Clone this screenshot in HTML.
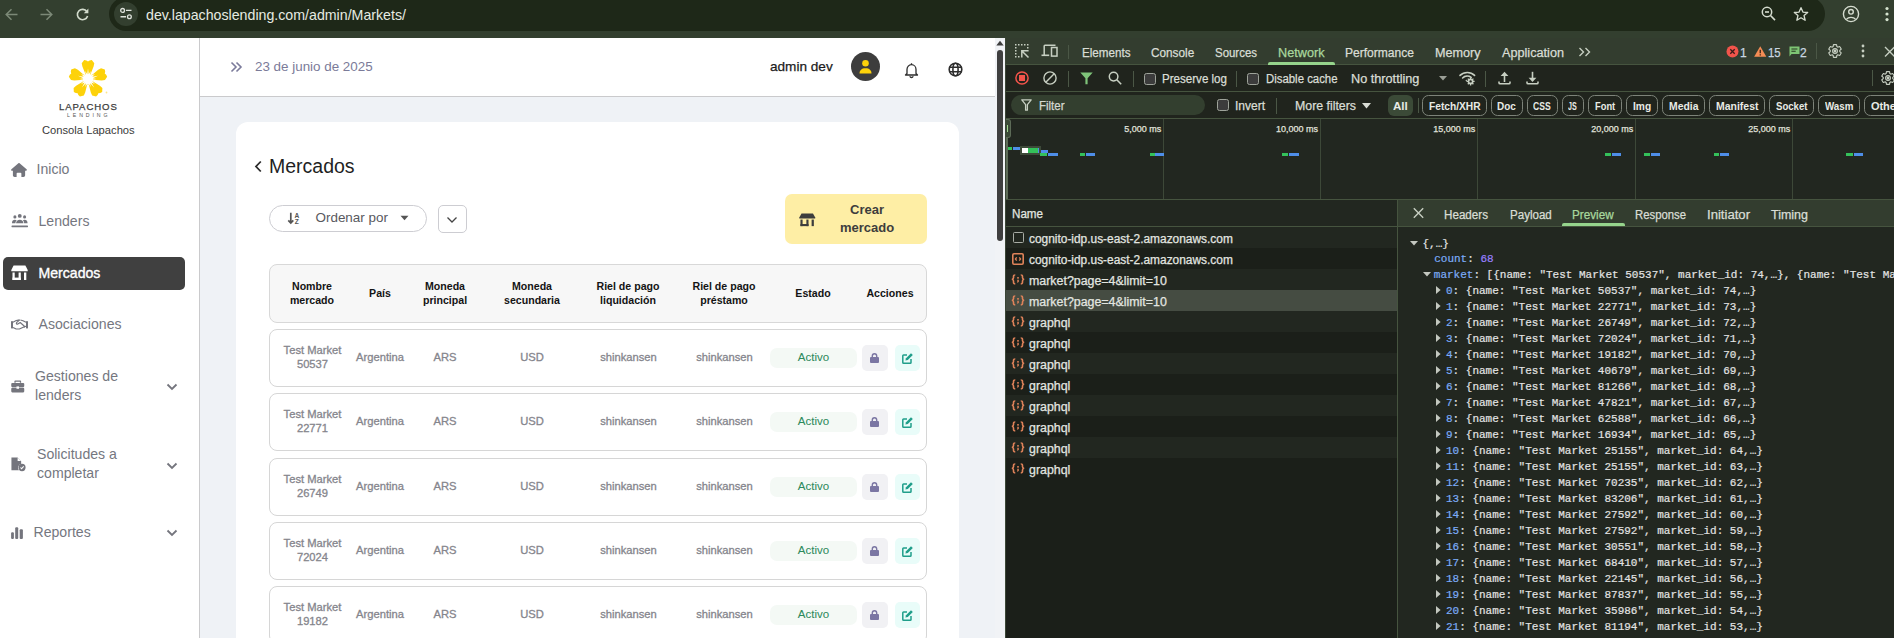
<!DOCTYPE html>
<html><head><meta charset="utf-8">
<style>
*{box-sizing:border-box;margin:0;padding:0}
html,body{width:1894px;height:638px;overflow:hidden;background:#fff;font-family:"Liberation Sans",sans-serif}
.a{position:absolute}
.t{position:absolute;white-space:nowrap;line-height:1}
svg{position:absolute;overflow:visible}
/* browser bar */
#bar{left:0;top:0;width:1894px;height:38px;background:#333f2f}
#pill{left:109px;top:-3.3px;width:1716px;height:34px;border-radius:17px;background:#1e2818}
/* sidebar */
#side{left:0;top:38px;width:200px;height:600px;background:#fff;border-right:1px solid #cacacc}
.nav{position:absolute;font-size:14.1px;color:#75777f;white-space:nowrap;line-height:19px}
/* header */
#hdr{left:200px;top:38px;width:795px;height:59px;background:#fff;border-bottom:1px solid #cacacc}
#content{left:200px;top:97px;width:795px;height:541px;background:#eff2f6}
#card{left:236px;top:122px;width:723px;height:540px;background:#fff;border-radius:12px}
.th{position:absolute;font-size:10.6px;font-weight:bold;color:#141414;text-align:center;line-height:14px;white-space:nowrap}
.row{position:absolute;left:269px;width:658px;height:58px;border:1px solid #d6d6d6;border-radius:8px;background:#fff}
.td{position:absolute;font-size:11.2px;color:#85858c;-webkit-text-stroke:0.3px #85858c;text-align:center;line-height:14px;white-space:nowrap;transform:translateX(-50%)}
.badge{position:absolute;width:87px;height:19.5px;border-radius:7px;background:#f4f9f5;color:#2d8a5c;-webkit-text-stroke:0.05px #2d8a5c;font-size:11.5px;text-align:center;line-height:19px}
.lock{position:absolute;width:26px;height:26px;border-radius:5px;background:#f1f1f4}
.edit{position:absolute;width:25px;height:26px;border-radius:5px;background:#e9fcf9}
/* devtools */
#dt{left:1005px;top:38px;width:889px;height:600px;background:#222720}
</style></head><body>

<!-- ============ BROWSER BAR ============ -->
<div id="bar" class="a">
  <div id="pill" class="a"></div>
  <!-- back -->
  <svg style="left:4.5px;top:7.5px" width="13" height="13" viewBox="0 0 13 13"><path d="M12.5 6.5H1.5M6.5 1.2L1.2 6.5l5.3 5.3" fill="none" stroke="#7c8977" stroke-width="1.5"/></svg>
  <svg style="left:40px;top:7.5px" width="13" height="13" viewBox="0 0 13 13"><path d="M0.5 6.5h11M6.5 1.2l5.3 5.3-5.3 5.3" fill="none" stroke="#7c8977" stroke-width="1.5"/></svg>
  <svg style="left:76px;top:7.5px" width="14" height="13" viewBox="0 0 14 13"><path d="M10.9 3.6A5.2 5.2 0 1 0 11.6 8" fill="none" stroke="#d3dccd" stroke-width="1.6"/><path d="M12.4 0.6v4.6H7.8z" fill="#d3dccd"/></svg>
  <div class="a" style="left:114px;top:2px;width:24px;height:24px;border-radius:12px;background:#333f2f"></div>
  <svg style="left:118px;top:6px" width="16" height="16" viewBox="0 0 16 16"><circle cx="4.6" cy="4.4" r="1.9" fill="none" stroke="#dfe3dc" stroke-width="1.3"/><path d="M8 4.4h5.5M2.5 10.8H8" stroke="#dfe3dc" stroke-width="1.4"/><circle cx="11.4" cy="10.8" r="1.9" fill="none" stroke="#dfe3dc" stroke-width="1.3"/></svg>
  <div class="t" style="left:146px;top:7px;font-size:14.2px;color:#e6ebe2;line-height:16px">dev.lapachoslending.com/admin/Markets/</div>
  <!-- zoom out -->
  <svg style="left:1760px;top:5px" width="18" height="18" viewBox="0 0 18 18"><circle cx="7" cy="7" r="4.7" fill="none" stroke="#d5dccf" stroke-width="1.5"/><path d="M5 7h4" stroke="#d5dccf" stroke-width="1.6"/><path d="M10.5 10.5l4.5 4.6" stroke="#d5dccf" stroke-width="1.6"/></svg>
  <svg style="left:1793px;top:6px" width="16" height="16" viewBox="0 0 24 24"><path d="M12 2.5l2.9 6.6 7.1.6-5.4 4.7 1.6 7-6.2-3.7-6.2 3.7 1.6-7L2 9.7l7.1-.6z" fill="none" stroke="#d5dccf" stroke-width="2" stroke-linejoin="round"/></svg>
  <svg style="left:1842px;top:5px" width="18" height="18" viewBox="0 0 18 18"><circle cx="9" cy="9" r="7.6" fill="none" stroke="#d5dccf" stroke-width="1.4"/><circle cx="9" cy="6.8" r="2.3" fill="none" stroke="#d5dccf" stroke-width="1.4"/><path d="M4.3 14.4c1.2-1.4 2.8-2 4.7-2s3.5.6 4.7 2" fill="none" stroke="#d5dccf" stroke-width="1.4"/></svg>
  <svg style="left:1884px;top:6px" width="6" height="16" viewBox="0 0 6 16"><circle cx="3" cy="2.5" r="1.6" fill="#d5e3cf"/><circle cx="3" cy="8" r="1.6" fill="#d5e3cf"/><circle cx="3" cy="13.6" r="1.6" fill="#d5e3cf"/></svg>
</div>

<!-- ============ SIDEBAR ============ -->
<div id="side" class="a"></div>
<!-- logo -->
<svg style="left:66px;top:57px" width="44" height="44" viewBox="-22 -22 44 44">
  <g fill="#fdd20a">
    <path d="M-2.2,-4 L-5.6,-12.5 L-6.3,-15.8 L-3.8,-18.9 L-1.6,-18.6 L0,-17.6 L1.6,-18.6 L3.8,-18.9 L6.3,-15.8 L5.6,-12.5 L2.2,-4 Z"/>
    <path d="M-2.2,-4 L-5.6,-12.5 L-6.3,-15.8 L-3.8,-18.9 L-1.6,-18.6 L0,-17.6 L1.6,-18.6 L3.8,-18.9 L6.3,-15.8 L5.6,-12.5 L2.2,-4 Z" transform="rotate(72)"/>
    <path d="M-2.2,-4 L-5.6,-12.5 L-6.3,-15.8 L-3.8,-18.9 L-1.6,-18.6 L0,-17.6 L1.6,-18.6 L3.8,-18.9 L6.3,-15.8 L5.6,-12.5 L2.2,-4 Z" transform="rotate(144)"/>
    <path d="M-2.2,-4 L-5.6,-12.5 L-6.3,-15.8 L-3.8,-18.9 L-1.6,-18.6 L0,-17.6 L1.6,-18.6 L3.8,-18.9 L6.3,-15.8 L5.6,-12.5 L2.2,-4 Z" transform="rotate(216)"/>
    <path d="M-2.2,-4 L-5.6,-12.5 L-6.3,-15.8 L-3.8,-18.9 L-1.6,-18.6 L0,-17.6 L1.6,-18.6 L3.8,-18.9 L6.3,-15.8 L5.6,-12.5 L2.2,-4 Z" transform="rotate(288)"/>
    <circle r="6"/>
  </g>
  <polygon points="0.00,-10.50 0.75,-4.74 2.63,-8.08 2.18,-4.28 6.17,-8.49 3.39,-3.39 6.88,-5.00 4.28,-2.18 9.99,-3.24 4.74,-0.75 8.50,0.00 4.74,0.75 9.99,3.24 4.28,2.18 6.88,5.00 3.39,3.39 6.17,8.49 2.18,4.28 2.63,8.08 0.75,4.74 0.00,10.50 -0.75,4.74 -2.63,8.08 -2.18,4.28 -6.17,8.49 -3.39,3.39 -6.88,5.00 -4.28,2.18 -9.99,3.24 -4.74,0.75 -8.50,0.00 -4.74,-0.75 -9.99,-3.24 -4.28,-2.18 -6.88,-5.00 -3.39,-3.39 -6.17,-8.49 -2.18,-4.28 -2.63,-8.08 -0.75,-4.74" fill="#fff"/>
  <circle cx="18.5" cy="13.5" r="0.9" fill="#fde58a"/>
</svg>
<div class="t" style="left:59px;top:102px;font-size:9.6px;color:#3d3d3d;-webkit-text-stroke:0.25px #3d3d3d;letter-spacing:0.9px;line-height:9px">LAPACHOS</div>
<div class="t" style="left:67px;top:111.5px;font-size:5.2px;color:#555;letter-spacing:2.9px;line-height:6px">LENDING</div>
<div class="t" style="left:42px;top:124px;font-size:11.2px;color:#3a3a3a;line-height:13px">Consola Lapachos</div>

<!-- nav -->
<svg style="left:10.5px;top:162.5px" width="16" height="14" viewBox="0 0 576 512"><path fill="#74757d" d="M575.8 255.5c0 18-15 32.1-32 32.1h-32l.7 160.2c.2 35.5-28.5 64.3-64 64.3H375V384c0-17.7-14.3-32-32-32h-110c-17.7 0-32 14.3-32 32v128h-72.2c-35.3 0-64-28.7-64-64V287.6H32c-18 0-32-14-32-32.1 0-9 3-17 10-24L266.4 8c7-7 15-8 22-8s15 2 21 7L564.8 231.5c8 7 12 15 11 24z"/></svg>
<div class="nav" style="left:36.5px;top:159.5px">Inicio</div>

<svg style="left:11px;top:213.2px" width="17.5" height="15.5" viewBox="0 0 18 16"><g fill="#74757d"><circle cx="9" cy="3" r="2"/><circle cx="4" cy="4" r="1.6"/><circle cx="14" cy="4" r="1.6"/><path d="M5.2 10.5c0-2.2 1.7-3.5 3.8-3.5s3.8 1.3 3.8 3.5z"/><path d="M1 10c0-1.8 1.2-3 3-3 .8 0 1.4.2 1.9.6-.9.8-1.4 1.8-1.4 2.9H1z"/><path d="M17 10c0-1.8-1.2-3-3-3-.8 0-1.4.2-1.9.6.9.8 1.4 1.8 1.4 2.9H17z"/><rect x="0.5" y="13" width="17" height="1.6" rx=".5"/></g></svg>
<div class="nav" style="left:38.5px;top:211.5px">Lenders</div>

<div class="a" style="left:3px;top:257px;width:182px;height:33px;border-radius:5px;background:#404040"></div>
<svg style="left:11px;top:265px" width="17" height="16" viewBox="0 0 17 16"><g fill="#fff"><path d="M2.6 0.5h11.8l2.3 4.5v1.3H0.3V5z"/><rect x="1.5" y="7.5" width="2.2" height="7.5"/><rect x="1.5" y="12.6" width="8.3" height="2.4"/><rect x="7.6" y="7.5" width="2.2" height="7.5"/><rect x="13" y="7.5" width="2.3" height="7.5"/></g></svg>
<div class="nav" style="left:38.5px;top:263.5px;color:#fff;-webkit-text-stroke:0.35px #fff">Mercados</div>

<svg style="left:11px;top:319px" width="17" height="10.5" viewBox="0 0 17 10.5"><g fill="#74757d"><rect x="0" y="2.2" width="2" height="7.2"/><rect x="15" y="2.2" width="2" height="7.2"/></g><g fill="none" stroke="#74757d" stroke-width="1.15" stroke-linejoin="round"><path d="M2 3.2L5.2 1.6 8.6 0.9"/><path d="M9.4 1L12 1.8 15 3.3"/><path d="M8.6 0.9L5.6 3.6c-.7.8.2 1.9 1.2 1.4L9.2 3.5l4.2 3.8c.4.5-.1 1.1-.6.9"/><path d="M2 8.4l3.2 1.6h3.2l4.4-2.1 2.2-.7"/></g></svg>
<div class="nav" style="left:38.5px;top:314.5px">Asociaciones</div>

<svg style="left:11px;top:380px" width="13.5" height="12.8" viewBox="0 0 16 14" preserveAspectRatio="none"><g fill="#74757d"><path d="M5 0.5h6c.6 0 1 .4 1 1V3h-1.5V2H5.5v1H4V1.5c0-.6.4-1 1-1z"/><rect x="0.3" y="3.3" width="15.4" height="4.5" rx="1.2"/><rect x="0.3" y="8.6" width="15.4" height="5" rx="1.2"/><rect x="6.5" y="7" width="3" height="2.6" fill="#fff"/></g></svg>
<div class="nav" style="left:35px;top:366.5px">Gestiones de</div>
<div class="nav" style="left:35px;top:385.5px">lenders</div>

<svg style="left:11px;top:456.8px" width="15" height="14.6" viewBox="0 0 17 16" preserveAspectRatio="none"><g fill="#74757d"><path d="M0.5 0.5h7l4 4v3.3a4 4 0 0 0-2.5 6.7H0.5z"/><circle cx="12.5" cy="11.5" r="4"/></g><path d="M10.7 11.5l1.3 1.3 2.4-2.5" fill="none" stroke="#fff" stroke-width="1.1"/><path d="M7.5 0.5v4h4" fill="#fff"/></svg>
<div class="nav" style="left:37px;top:444.5px">Solicitudes a</div>
<div class="nav" style="left:37px;top:463.5px">completar</div>

<svg style="left:11px;top:526.8px" width="12" height="12" viewBox="0 0 12 12"><g fill="#74757d"><rect x="0.1" y="5.3" width="2.8" height="6.6" rx="1"/><rect x="4.2" y="0.2" width="3" height="11.7" rx="1"/><rect x="8.7" y="2.2" width="3.2" height="9.7" rx="1"/></g></svg>
<div class="nav" style="left:33.5px;top:522.5px">Reportes</div>

<svg style="left:166px;top:383px" width="12" height="8" viewBox="0 0 12 8"><path d="M1.5 1.5l4.5 4.5 4.5-4.5" fill="none" stroke="#74757d" stroke-width="1.8"/></svg>
<svg style="left:166px;top:462px" width="12" height="8" viewBox="0 0 12 8"><path d="M1.5 1.5l4.5 4.5 4.5-4.5" fill="none" stroke="#74757d" stroke-width="1.8"/></svg>
<svg style="left:166px;top:529px" width="12" height="8" viewBox="0 0 12 8"><path d="M1.5 1.5l4.5 4.5 4.5-4.5" fill="none" stroke="#74757d" stroke-width="1.8"/></svg>

<!-- ============ HEADER / CONTENT ============ -->
<div id="hdr" class="a"></div>
<div id="content" class="a"></div>
<div id="card" class="a"></div>
<!-- header content -->
<svg style="left:230px;top:61px" width="13" height="12" viewBox="0 0 13 12"><path d="M1.5 1.5l4.5 4.5-4.5 4.5M6.5 1.5l4.5 4.5-4.5 4.5" fill="none" stroke="#7b7b9b" stroke-width="1.6"/></svg>
<div class="t" style="left:255px;top:59px;font-size:13.4px;color:#7b7b99;line-height:16px">23 de junio de 2025</div>
<div class="t" style="left:770px;top:59px;font-size:13.6px;color:#1c1c1c;line-height:16px;-webkit-text-stroke:0.25px #1c1c1c">admin dev</div>
<div class="a" style="left:851px;top:52px;width:29px;height:29px;border-radius:50%;background:#3d3d3d"></div>
<svg style="left:858px;top:59px" width="15" height="16" viewBox="0 0 15 16"><circle cx="7.5" cy="4.2" r="3.3" fill="#fdd20a"/><path d="M1.5 14.5c0-3.2 2.2-5.2 6-5.2s6 2 6 5.2z" fill="#fdd20a"/></svg>
<svg style="left:904px;top:62px" width="15" height="16" viewBox="0 0 15 16"><path d="M7.5 1.2v1.2M3 11.5V7.5c0-2.6 1.9-4.8 4.5-4.8S12 4.9 12 7.5v4l1.5 1.5H1.5L3 11.5z" fill="none" stroke="#2d2d2d" stroke-width="1.3" stroke-linejoin="round"/><path d="M5.8 14.2c.3.8 1 1.3 1.7 1.3s1.4-.5 1.7-1.3" fill="none" stroke="#2d2d2d" stroke-width="1.3"/></svg>
<svg style="left:948px;top:62px" width="15" height="15" viewBox="0 0 15 15"><g fill="none" stroke="#2d2d2d" stroke-width="1.6"><circle cx="7.5" cy="7.5" r="6.3"/><ellipse cx="7.5" cy="7.5" rx="2.6" ry="6.3"/><path d="M1.2 5.3h12.6M1.2 9.7h12.6"/></g></svg>

<!-- card content -->
<svg style="left:254px;top:160px" width="9" height="13" viewBox="0 0 9 13"><path d="M6.8 1.5L2 6.5l4.8 5" fill="none" stroke="#2a2a2a" stroke-width="1.8"/></svg>
<div class="t" style="left:269px;top:155px;font-size:19.5px;color:#1f1f1f;line-height:23px">Mercados</div>

<div class="a" style="left:269px;top:205px;width:158px;height:27px;border:1px solid #cdcdd2;border-radius:14px"></div>
<svg style="left:287px;top:211px" width="14" height="14" viewBox="0 0 14 14"><path d="M3.8 1.8v10M1.3 9.3l2.5 2.7 2.5-2.7" fill="none" stroke="#555" stroke-width="1.7"/><text x="7.6" y="6.5" font-size="6.6" font-family="Liberation Sans" font-weight="bold" fill="#555">A</text><text x="7.8" y="13" font-size="6.6" font-family="Liberation Sans" font-weight="bold" fill="#555">Z</text></svg>
<div class="t" style="left:315.5px;top:210.3px;font-size:13.45px;color:#58585e;line-height:16px">Ordenar por</div>
<svg style="left:400px;top:215px" width="9" height="6" viewBox="0 0 9 6"><path d="M0.5 0.8h8L4.5 5.2z" fill="#555"/></svg>
<div class="a" style="left:438px;top:205px;width:29px;height:28px;border:1px solid #cdcdd2;border-radius:5px"></div>
<svg style="left:446px;top:215.5px" width="12" height="8" viewBox="0 0 12 8"><path d="M1.5 1.5l4.5 4.5 4.5-4.5" fill="none" stroke="#444" stroke-width="1.3"/></svg>

<div class="a" style="left:785px;top:194px;width:142px;height:50px;border-radius:7px;background:#feeea5"></div>
<svg style="left:799px;top:212.5px" width="16.5" height="14" viewBox="0 0 17 16" preserveAspectRatio="none"><g fill="#3d3d3d"><path d="M2.6 0.5h11.8l2.3 4.5v1.3H0.3V5z"/><rect x="1.5" y="7.5" width="2.2" height="7.5"/><rect x="1.5" y="12.6" width="8.3" height="2.4"/><rect x="7.6" y="7.5" width="2.2" height="7.5"/><rect x="13" y="7.5" width="2.3" height="7.5"/></g></svg>
<div class="t" style="left:827px;top:201px;width:80px;text-align:center;font-size:13px;font-weight:bold;color:#3d3d3d;line-height:18px">Crear<br>mercado</div>

<!-- table header -->
<div class="a" style="left:269px;top:264px;width:658px;height:59px;border:1px solid #d8d8d8;border-radius:8px;background:#f7f7f7"></div>
<div class="th" style="left:272px;top:279px;width:80px">Nombre<br>mercado</div>
<div class="th" style="left:340px;top:286px;width:80px">País</div>
<div class="th" style="left:405px;top:279px;width:80px">Moneda<br>principal</div>
<div class="th" style="left:492px;top:279px;width:80px">Moneda<br>secundaria</div>
<div class="th" style="left:578px;top:279px;width:100px">Riel de pago<br>liquidación</div>
<div class="th" style="left:674px;top:279px;width:100px">Riel de pago<br>préstamo</div>
<div class="th" style="left:773px;top:286px;width:80px">Estado</div>
<div class="th" style="left:850px;top:286px;width:80px">Acciones</div>
<div class="row" style="top:329px"></div>
<div class="td" style="left:312.5px;top:343.40px">Test Market<br>50537</div>
<div class="td" style="left:380px;top:350.20px">Argentina</div>
<div class="td" style="left:445px;top:350.20px">ARS</div>
<div class="td" style="left:532px;top:350.20px">USD</div>
<div class="td" style="left:628.5px;top:350.20px">shinkansen</div>
<div class="td" style="left:724.5px;top:350.20px">shinkansen</div>
<div class="badge" style="left:770px;top:348.00px">Activo</div>
<div class="lock" style="left:862px;top:345.00px"></div>
<svg style="left:870px;top:353.00px" width="9" height="10" viewBox="0 0 9 10"><path d="M2.3 4.2V3a2.2 2.2 0 0 1 4.4 0v1.2" fill="none" stroke="#7b76a3" stroke-width="1.4"/><rect x="0" y="3.9" width="9" height="6.1" rx="1" fill="#7b76a3"/></svg>
<div class="edit" style="left:895px;top:345.00px"></div>
<svg style="left:901.5px;top:352.50px" width="11" height="11" viewBox="0 0 11 11"><path d="M5 2H1.6c-.5 0-.8.3-.8.8v6.6c0 .5.3.8.8.8h6.6c.5 0 .8-.3.8-.8V6" fill="none" stroke="#1f9e8a" stroke-width="1.5"/><path d="M9 0.2l1.8 1.8-5 5-2.4.6.6-2.4z" fill="#1f9e8a"/></svg>
<div class="row" style="top:393px"></div>
<div class="td" style="left:312.5px;top:407.40px">Test Market<br>22771</div>
<div class="td" style="left:380px;top:414.20px">Argentina</div>
<div class="td" style="left:445px;top:414.20px">ARS</div>
<div class="td" style="left:532px;top:414.20px">USD</div>
<div class="td" style="left:628.5px;top:414.20px">shinkansen</div>
<div class="td" style="left:724.5px;top:414.20px">shinkansen</div>
<div class="badge" style="left:770px;top:412.00px">Activo</div>
<div class="lock" style="left:862px;top:409.00px"></div>
<svg style="left:870px;top:417.00px" width="9" height="10" viewBox="0 0 9 10"><path d="M2.3 4.2V3a2.2 2.2 0 0 1 4.4 0v1.2" fill="none" stroke="#7b76a3" stroke-width="1.4"/><rect x="0" y="3.9" width="9" height="6.1" rx="1" fill="#7b76a3"/></svg>
<div class="edit" style="left:895px;top:409.00px"></div>
<svg style="left:901.5px;top:416.50px" width="11" height="11" viewBox="0 0 11 11"><path d="M5 2H1.6c-.5 0-.8.3-.8.8v6.6c0 .5.3.8.8.8h6.6c.5 0 .8-.3.8-.8V6" fill="none" stroke="#1f9e8a" stroke-width="1.5"/><path d="M9 0.2l1.8 1.8-5 5-2.4.6.6-2.4z" fill="#1f9e8a"/></svg>
<div class="row" style="top:458px"></div>
<div class="td" style="left:312.5px;top:472.40px">Test Market<br>26749</div>
<div class="td" style="left:380px;top:479.20px">Argentina</div>
<div class="td" style="left:445px;top:479.20px">ARS</div>
<div class="td" style="left:532px;top:479.20px">USD</div>
<div class="td" style="left:628.5px;top:479.20px">shinkansen</div>
<div class="td" style="left:724.5px;top:479.20px">shinkansen</div>
<div class="badge" style="left:770px;top:477.00px">Activo</div>
<div class="lock" style="left:862px;top:474.00px"></div>
<svg style="left:870px;top:482.00px" width="9" height="10" viewBox="0 0 9 10"><path d="M2.3 4.2V3a2.2 2.2 0 0 1 4.4 0v1.2" fill="none" stroke="#7b76a3" stroke-width="1.4"/><rect x="0" y="3.9" width="9" height="6.1" rx="1" fill="#7b76a3"/></svg>
<div class="edit" style="left:895px;top:474.00px"></div>
<svg style="left:901.5px;top:481.50px" width="11" height="11" viewBox="0 0 11 11"><path d="M5 2H1.6c-.5 0-.8.3-.8.8v6.6c0 .5.3.8.8.8h6.6c.5 0 .8-.3.8-.8V6" fill="none" stroke="#1f9e8a" stroke-width="1.5"/><path d="M9 0.2l1.8 1.8-5 5-2.4.6.6-2.4z" fill="#1f9e8a"/></svg>
<div class="row" style="top:522px"></div>
<div class="td" style="left:312.5px;top:536.40px">Test Market<br>72024</div>
<div class="td" style="left:380px;top:543.20px">Argentina</div>
<div class="td" style="left:445px;top:543.20px">ARS</div>
<div class="td" style="left:532px;top:543.20px">USD</div>
<div class="td" style="left:628.5px;top:543.20px">shinkansen</div>
<div class="td" style="left:724.5px;top:543.20px">shinkansen</div>
<div class="badge" style="left:770px;top:541.00px">Activo</div>
<div class="lock" style="left:862px;top:538.00px"></div>
<svg style="left:870px;top:546.00px" width="9" height="10" viewBox="0 0 9 10"><path d="M2.3 4.2V3a2.2 2.2 0 0 1 4.4 0v1.2" fill="none" stroke="#7b76a3" stroke-width="1.4"/><rect x="0" y="3.9" width="9" height="6.1" rx="1" fill="#7b76a3"/></svg>
<div class="edit" style="left:895px;top:538.00px"></div>
<svg style="left:901.5px;top:545.50px" width="11" height="11" viewBox="0 0 11 11"><path d="M5 2H1.6c-.5 0-.8.3-.8.8v6.6c0 .5.3.8.8.8h6.6c.5 0 .8-.3.8-.8V6" fill="none" stroke="#1f9e8a" stroke-width="1.5"/><path d="M9 0.2l1.8 1.8-5 5-2.4.6.6-2.4z" fill="#1f9e8a"/></svg>
<div class="row" style="top:586px"></div>
<div class="td" style="left:312.5px;top:600.40px">Test Market<br>19182</div>
<div class="td" style="left:380px;top:607.20px">Argentina</div>
<div class="td" style="left:445px;top:607.20px">ARS</div>
<div class="td" style="left:532px;top:607.20px">USD</div>
<div class="td" style="left:628.5px;top:607.20px">shinkansen</div>
<div class="td" style="left:724.5px;top:607.20px">shinkansen</div>
<div class="badge" style="left:770px;top:605.00px">Activo</div>
<div class="lock" style="left:862px;top:602.00px"></div>
<svg style="left:870px;top:610.00px" width="9" height="10" viewBox="0 0 9 10"><path d="M2.3 4.2V3a2.2 2.2 0 0 1 4.4 0v1.2" fill="none" stroke="#7b76a3" stroke-width="1.4"/><rect x="0" y="3.9" width="9" height="6.1" rx="1" fill="#7b76a3"/></svg>
<div class="edit" style="left:895px;top:602.00px"></div>
<svg style="left:901.5px;top:609.50px" width="11" height="11" viewBox="0 0 11 11"><path d="M5 2H1.6c-.5 0-.8.3-.8.8v6.6c0 .5.3.8.8.8h6.6c.5 0 .8-.3.8-.8V6" fill="none" stroke="#1f9e8a" stroke-width="1.5"/><path d="M9 0.2l1.8 1.8-5 5-2.4.6.6-2.4z" fill="#1f9e8a"/></svg>
<!-- page scrollbar -->
<div class="a" style="left:995px;top:38px;width:10px;height:600px;background:#f1f3f6"></div>
<svg style="left:996px;top:40px" width="8" height="6" viewBox="0 0 8 6"><path d="M0.3 5.5L4 0.8l3.7 4.7z" fill="#3d3d3d"/></svg>
<div class="a" style="left:997px;top:50px;width:6px;height:191px;border-radius:3px;background:#3f3f3f"></div>
<!-- ============ DEVTOOLS ============ -->
<div class="a" style="left:1005px;top:38px;width:889px;height:600px;background:#1b1f19"></div>
<div class="a" style="left:1005px;top:38px;width:889px;height:27px;background:#333d2f;border-bottom:1px solid #46543f"></div>
<div class="a" style="left:1005px;top:65px;width:889px;height:27px;background:#20241d;border-bottom:1px solid #46543f"></div>
<div class="a" style="left:1005px;top:92px;width:889px;height:27px;background:#20241d;border-bottom:1px solid #46543f"></div>
<div class="a" style="left:1005px;top:119px;width:889px;height:81px;background:#222720;border-bottom:1px solid #46543f"></div>
<div class="a" style="left:1005px;top:38px;width:1px;height:600px;background:#3b4636"></div>
<svg style="left:1015px;top:44px" width="15" height="15" viewBox="0 0 15 15"><rect x="0" y="0" width="1.5" height="1.5" fill="#c7cfc2"/><rect x="3" y="0" width="1.5" height="1.5" fill="#c7cfc2"/><rect x="6" y="0" width="1.5" height="1.5" fill="#c7cfc2"/><rect x="9" y="0" width="1.5" height="1.5" fill="#c7cfc2"/><rect x="12" y="0" width="1.5" height="1.5" fill="#c7cfc2"/><rect x="12" y="3" width="1.5" height="1.5" fill="#c7cfc2"/><rect x="0" y="3" width="1.5" height="1.5" fill="#c7cfc2"/><rect x="0" y="6" width="1.5" height="1.5" fill="#c7cfc2"/><rect x="0" y="9" width="1.5" height="1.5" fill="#c7cfc2"/><rect x="0" y="12" width="1.5" height="1.5" fill="#c7cfc2"/><rect x="3" y="12" width="1.5" height="1.5" fill="#c7cfc2"/><path d="M6.8 13.5V6.8h6.8M7.2 7.2l6.3 6.3" fill="none" stroke="#c7cfc2" stroke-width="1.5"/></svg>
<svg style="left:1040.8px;top:44px" width="17" height="13" viewBox="0 0 17 13"><path d="M14.5 1.3H4c-.5 0-.8.3-.8.8V11.2" fill="none" stroke="#c7cfc2" stroke-width="1.5"/><rect x="0.5" y="10.5" width="7.7" height="1.6" fill="#c7cfc2"/><rect x="10.5" y="3.5" width="5.5" height="8.6" fill="none" stroke="#c7cfc2" stroke-width="1.5"/></svg>
<div class="a" style="left:1068px;top:45px;width:1px;height:14px;background:#4b5746"></div>
<div class="t" style="left:1081.50px;top:46.84px;font-size:12px;-webkit-text-stroke:0.25px #d9ddd5;color:#d9ddd5;transform:scaleX(0.9696);transform-origin:0 0;">Elements</div>
<div class="t" style="left:1150.80px;top:46.84px;font-size:12px;-webkit-text-stroke:0.25px #d9ddd5;color:#d9ddd5;transform:scaleX(0.9812);transform-origin:0 0;">Console</div>
<div class="t" style="left:1215.00px;top:46.84px;font-size:12px;-webkit-text-stroke:0.25px #d9ddd5;color:#d9ddd5;transform:scaleX(0.9541);transform-origin:0 0;">Sources</div>
<div class="t" style="left:1278.00px;top:46.84px;font-size:12px;-webkit-text-stroke:0.25px #a8d79d;color:#a8d79d;transform:scaleX(1.0566);transform-origin:0 0;">Network</div>
<div class="t" style="left:1345.00px;top:46.84px;font-size:12px;-webkit-text-stroke:0.25px #d9ddd5;color:#d9ddd5;transform:scaleX(1.0044);transform-origin:0 0;">Performance</div>
<div class="t" style="left:1435.40px;top:46.84px;font-size:12px;-webkit-text-stroke:0.25px #d9ddd5;color:#d9ddd5;transform:scaleX(1.0522);transform-origin:0 0;">Memory</div>
<div class="t" style="left:1502.10px;top:46.84px;font-size:12px;-webkit-text-stroke:0.25px #d9ddd5;color:#d9ddd5;transform:scaleX(1.0561);transform-origin:0 0;">Application</div>
<div class="a" style="left:1268px;top:61.5px;width:67px;height:3px;border-radius:2px 2px 0 0;background:#96d48c"></div>
<svg style="left:1578px;top:47px" width="14" height="10" viewBox="0 0 14 10"><path d="M1.5 1l4 4-4 4M7.5 1l4 4-4 4" fill="none" stroke="#c7cfc2" stroke-width="1.4"/></svg>
<svg style="left:1725.5px;top:44.5px" width="13" height="13" viewBox="0 0 13 13"><circle cx="6.5" cy="6.5" r="6" fill="#f2544b"/><path d="M4.3 4.3l4.4 4.4M8.7 4.3l-4.4 4.4" stroke="#3a1a18" stroke-width="1.3"/></svg>
<div class="t" style="left:1740.00px;top:46.84px;font-size:12px;-webkit-text-stroke:0.25px #c9d6e0;color:#c9d6e0;">1</div>
<svg style="left:1754px;top:45.5px" width="12.5" height="11" viewBox="0 0 12.5 11"><path d="M6.25 0.3l6.1 10.4H0.15z" fill="#f48c55"/><path d="M6.25 3.8v3.4M6.25 8.2v1.2" stroke="#3a2417" stroke-width="1.3"/></svg>
<div class="t" style="left:1767.80px;top:46.84px;font-size:12px;-webkit-text-stroke:0.25px #c9d6e0;color:#c9d6e0;transform:scaleX(0.9440);transform-origin:0 0;">15</div>
<svg style="left:1788.5px;top:45.5px" width="11" height="11" viewBox="0 0 11 11"><path d="M0.5 0.5h10v7.5H2.5L0.5 10.5z" fill="#7ec574"/><path d="M2.4 3h6M2.4 5.3h4.3" stroke="#27361f" stroke-width="1.1"/></svg>
<div class="t" style="left:1800.00px;top:46.84px;font-size:12px;-webkit-text-stroke:0.25px #c9d6e0;color:#c9d6e0;">2</div>
<div class="a" style="left:1816px;top:43px;width:1px;height:16px;background:#4b5746"></div>
<svg style="left:1827px;top:43px" width="16" height="16" viewBox="0 0 24 24"><path d="M19.14 12.94c.04-.3.06-.61.06-.94 0-.32-.02-.64-.07-.94l2.03-1.58c.18-.14.23-.41.12-.61l-1.92-3.32c-.12-.22-.37-.29-.59-.22l-2.39.96c-.5-.38-1.03-.7-1.62-.94l-.36-2.54c-.04-.24-.24-.41-.48-.41h-3.84c-.24 0-.43.17-.47.41l-.36 2.54c-.59.24-1.13.57-1.62.94l-2.39-.96c-.22-.08-.47 0-.59.22L2.74 8.87c-.12.21-.08.47.12.61l2.03 1.58c-.05.3-.09.63-.09.94s.02.64.07.94l-2.03 1.58c-.18.14-.23.41-.12.61l1.92 3.32c.12.22.37.29.59.22l2.39-.96c.5.38 1.03.7 1.62.94l.36 2.54c.05.24.24.41.48.41h3.84c.24 0 .44-.17.47-.41l.36-2.54c.59-.24 1.13-.56 1.62-.94l2.39.96c.22.08.47 0 .59-.22l1.92-3.32c.12-.22.07-.47-.12-.61l-2.01-1.58zM12 15.6c-1.98 0-3.6-1.62-3.6-3.6s1.62-3.6 3.6-3.6 3.6 1.62 3.6 3.6-1.62 3.6-3.6 3.6z" fill="none" stroke="#c7cfc2" stroke-width="1.7"/><circle cx="12" cy="12" r="2.2" fill="#c7cfc2"/></svg>
<svg style="left:1861px;top:44px" width="4" height="14" viewBox="0 0 4 14"><circle cx="2" cy="2" r="1.4" fill="#c7cfc2"/><circle cx="2" cy="7" r="1.4" fill="#c7cfc2"/><circle cx="2" cy="12" r="1.4" fill="#c7cfc2"/></svg>
<svg style="left:1884px;top:46px" width="11" height="11" viewBox="0 0 11 11"><path d="M1 1l9.5 9.5M10.5 1L1 10.5" stroke="#c7cfc2" stroke-width="1.4"/></svg>
<svg style="left:1015px;top:71px" width="14" height="14" viewBox="0 0 14 14"><circle cx="7" cy="7" r="6.1" fill="none" stroke="#f2544b" stroke-width="1.5"/><rect x="4" y="4" width="6" height="6" fill="#f2544b"/></svg>
<svg style="left:1043px;top:71px" width="14" height="14" viewBox="0 0 14 14"><circle cx="7" cy="7" r="6.1" fill="none" stroke="#c7cfc2" stroke-width="1.4"/><path d="M2.8 11.2l8.4-8.4" stroke="#c7cfc2" stroke-width="1.4"/></svg>
<div class="a" style="left:1068px;top:71px;width:1px;height:16px;background:#4b5746"></div>
<svg style="left:1080px;top:72px" width="13" height="13" viewBox="0 0 13 13"><path d="M0.3 0.5h12.4L7.6 6.2V12.3H5.4V6.2z" fill="#7fc47a"/></svg>
<svg style="left:1108px;top:71px" width="14" height="14" viewBox="0 0 14 14"><circle cx="5.6" cy="5.6" r="4.3" fill="none" stroke="#c7cfc2" stroke-width="1.5"/><path d="M8.8 8.8l4.4 4.4" stroke="#c7cfc2" stroke-width="1.6"/></svg>
<div class="a" style="left:1133px;top:71px;width:1px;height:16px;background:#4b5746"></div>
<div class="a" style="left:1144px;top:72.5px;width:12px;height:12px;border:1px solid #9ea39a;border-radius:2.5px;background:#3c3c3c"></div>
<div class="t" style="left:1162.00px;top:72.84px;font-size:12px;-webkit-text-stroke:0.25px #d9ddd5;color:#d9ddd5;transform:scaleX(0.9649);transform-origin:0 0;">Preserve log</div>
<div class="a" style="left:1236px;top:71px;width:1px;height:16px;background:#4b5746"></div>
<div class="a" style="left:1247px;top:72.5px;width:12px;height:12px;border:1px solid #9ea39a;border-radius:2.5px;background:#3c3c3c"></div>
<div class="t" style="left:1265.60px;top:72.84px;font-size:12px;-webkit-text-stroke:0.25px #d9ddd5;color:#d9ddd5;transform:scaleX(0.9486);transform-origin:0 0;">Disable cache</div>
<div class="t" style="left:1350.60px;top:72.84px;font-size:12px;-webkit-text-stroke:0.25px #d9ddd5;color:#d9ddd5;transform:scaleX(1.0572);transform-origin:0 0;">No throttling</div>
<svg style="left:1439px;top:75.8px" width="8" height="4.5" viewBox="0 0 8 4.5"><path d="M0 0h8L4 4.5z" fill="#9a9e96"/></svg>
<svg style="left:1458.5px;top:71px" width="17" height="15" viewBox="0 0 17 15"><path d="M1 4.4a10.5 10.5 0 0 1 14.6 0M3.6 7a6.8 6.8 0 0 1 8.6-.6" fill="none" stroke="#c7cfc2" stroke-width="1.6" stroke-linecap="round"/><path d="M6.3 9.5l1.4-.9.3 1.8z" fill="#c7cfc2"/><g transform="translate(11.6 10.4)"><circle r="2.9" fill="#c7cfc2"/><path d="M0-4v8M-4 0h8M-2.8-2.8l5.6 5.6M2.8-2.8l-5.6 5.6" stroke="#c7cfc2" stroke-width="1.3"/><circle r="1.2" fill="#20241d"/></g></svg>
<div class="a" style="left:1485px;top:71px;width:1px;height:16px;background:#4b5746"></div>
<svg style="left:1497.5px;top:71px" width="13" height="14" viewBox="0 0 13 14"><path d="M6.5 11V4.5" stroke="#c7cfc2" stroke-width="1.6"/><path d="M6.5 0.8L2.6 5h7.8z" fill="#c7cfc2"/><path d="M1 10.5v1.2c0 .7.4 1.1 1.1 1.1h8.8c.7 0 1.1-.4 1.1-1.1v-1.2" fill="none" stroke="#c7cfc2" stroke-width="1.6"/></svg>
<svg style="left:1525.5px;top:71px" width="13" height="14" viewBox="0 0 13 14"><path d="M6.5 0.8v6.5" stroke="#c7cfc2" stroke-width="1.6"/><path d="M6.5 11L2.6 6.8h7.8z" fill="#c7cfc2"/><path d="M1 10.5v1.2c0 .7.4 1.1 1.1 1.1h8.8c.7 0 1.1-.4 1.1-1.1v-1.2" fill="none" stroke="#c7cfc2" stroke-width="1.6"/></svg>
<div class="a" style="left:1872px;top:70px;width:1px;height:16px;background:#4b5746"></div>
<svg style="left:1880px;top:70px" width="16" height="16" viewBox="0 0 24 24"><path d="M19.14 12.94c.04-.3.06-.61.06-.94 0-.32-.02-.64-.07-.94l2.03-1.58c.18-.14.23-.41.12-.61l-1.92-3.32c-.12-.22-.37-.29-.59-.22l-2.39.96c-.5-.38-1.03-.7-1.62-.94l-.36-2.54c-.04-.24-.24-.41-.48-.41h-3.84c-.24 0-.43.17-.47.41l-.36 2.54c-.59.24-1.13.57-1.62.94l-2.39-.96c-.22-.08-.47 0-.59.22L2.74 8.87c-.12.21-.08.47.12.61l2.03 1.58c-.05.3-.09.63-.09.94s.02.64.07.94l-2.03 1.58c-.18.14-.23.41-.12.61l1.92 3.32c.12.22.37.29.59.22l2.39-.96c.5.38 1.03.7 1.62.94l.36 2.54c.05.24.24.41.48.41h3.84c.24 0 .44-.17.47-.41l.36-2.54c.59-.24 1.13-.56 1.62-.94l2.39.96c.22.08.47 0 .59-.22l1.92-3.32c.12-.22.07-.47-.12-.61l-2.01-1.58zM12 15.6c-1.98 0-3.6-1.62-3.6-3.6s1.62-3.6 3.6-3.6 3.6 1.62 3.6 3.6-1.62 3.6-3.6 3.6z" fill="none" stroke="#c7cfc2" stroke-width="1.7"/><circle cx="12" cy="12" r="2.2" fill="#c7cfc2"/></svg>
<div class="a" style="left:1011px;top:95px;width:194px;height:20px;border-radius:10px;background:#333f2f"></div>
<svg style="left:1021px;top:99px" width="11" height="12" viewBox="0 0 11 12"><path d="M0.8 0.8h9.4L6.4 5.6v5.6H4.6V5.6z" fill="none" stroke="#c7cfc2" stroke-width="1.3" stroke-linejoin="round"/></svg>
<div class="t" style="left:1039.40px;top:99.84px;font-size:12px;-webkit-text-stroke:0.25px #d5d9d1;color:#d5d9d1;transform:scaleX(0.9563);transform-origin:0 0;">Filter</div>
<div class="a" style="left:1217px;top:99.3px;width:12px;height:12px;border:1px solid #9ea39a;border-radius:2.5px;background:#3c3c3c"></div>
<div class="t" style="left:1235.00px;top:99.84px;font-size:12px;-webkit-text-stroke:0.25px #d9ddd5;color:#d9ddd5;transform:scaleX(0.9996);transform-origin:0 0;">Invert</div>
<div class="a" style="left:1276px;top:98px;width:1px;height:16px;background:#4b5746"></div>
<div class="t" style="left:1295.00px;top:99.84px;font-size:12px;-webkit-text-stroke:0.25px #d9ddd5;color:#d9ddd5;transform:scaleX(1.0279);transform-origin:0 0;">More filters</div>
<svg style="left:1362px;top:102.5px" width="9" height="6" viewBox="0 0 9 6"><path d="M0 0h9L4.5 5.5z" fill="#d9ddd5"/></svg>
<div class="a" style="left:1388px;top:95.2px;width:25px;height:20.6px;border-radius:6px;background:#3b4a37"></div>
<div class="t" style="left:1393.00px;top:100.99px;font-size:11px;font-weight:bold;color:#e8ebe5;transform:scaleX(1.0529);transform-origin:0 0;">All</div>
<div class="a" style="left:1417.5px;top:98px;width:1px;height:15px;background:#4b5746"></div>
<div class="a" style="left:1422px;top:95.2px;width:64.8px;height:20.6px;border:1px solid #7d8379;border-radius:6.5px"></div>
<div class="t" style="left:1428.60px;top:100.99px;font-size:11px;font-weight:bold;color:#e8ebe5;transform:scaleX(0.9278);transform-origin:0 0;">Fetch/XHR</div>
<div class="a" style="left:1490.8px;top:95.2px;width:32.0px;height:20.6px;border:1px solid #7d8379;border-radius:6.5px"></div>
<div class="t" style="left:1497.40px;top:100.99px;font-size:11px;font-weight:bold;color:#e8ebe5;transform:scaleX(0.9047);transform-origin:0 0;">Doc</div>
<div class="a" style="left:1526.8px;top:95.2px;width:30.9px;height:20.6px;border:1px solid #7d8379;border-radius:6.5px"></div>
<div class="t" style="left:1533.40px;top:100.99px;font-size:11px;font-weight:bold;color:#e8ebe5;transform:scaleX(0.7826);transform-origin:0 0;">CSS</div>
<div class="a" style="left:1561.7px;top:95.2px;width:21.9px;height:20.6px;border:1px solid #7d8379;border-radius:6.5px"></div>
<div class="t" style="left:1568.30px;top:100.99px;font-size:11px;font-weight:bold;color:#e8ebe5;transform:scaleX(0.6466);transform-origin:0 0;">JS</div>
<div class="a" style="left:1588.3px;top:95.2px;width:33.4px;height:20.6px;border:1px solid #7d8379;border-radius:6.5px"></div>
<div class="t" style="left:1594.90px;top:100.99px;font-size:11px;font-weight:bold;color:#e8ebe5;transform:scaleX(0.8480);transform-origin:0 0;">Font</div>
<div class="a" style="left:1626.4px;top:95.2px;width:31.3px;height:20.6px;border:1px solid #7d8379;border-radius:6.5px"></div>
<div class="t" style="left:1633.00px;top:100.99px;font-size:11px;font-weight:bold;color:#e8ebe5;transform:scaleX(0.9255);transform-origin:0 0;">Img</div>
<div class="a" style="left:1662px;top:95.2px;width:42.6px;height:20.6px;border:1px solid #7d8379;border-radius:6.5px"></div>
<div class="t" style="left:1668.60px;top:100.99px;font-size:11px;font-weight:bold;color:#e8ebe5;transform:scaleX(0.9431);transform-origin:0 0;">Media</div>
<div class="a" style="left:1709px;top:95.2px;width:55.7px;height:20.6px;border:1px solid #7d8379;border-radius:6.5px"></div>
<div class="t" style="left:1715.60px;top:100.99px;font-size:11px;font-weight:bold;color:#e8ebe5;transform:scaleX(0.9525);transform-origin:0 0;">Manifest</div>
<div class="a" style="left:1769px;top:95.2px;width:44.7px;height:20.6px;border:1px solid #7d8379;border-radius:6.5px"></div>
<div class="t" style="left:1775.60px;top:100.99px;font-size:11px;font-weight:bold;color:#e8ebe5;transform:scaleX(0.8732);transform-origin:0 0;">Socket</div>
<div class="a" style="left:1818px;top:95.2px;width:41.6px;height:20.6px;border:1px solid #7d8379;border-radius:6.5px"></div>
<div class="t" style="left:1824.60px;top:100.99px;font-size:11px;font-weight:bold;color:#e8ebe5;transform:scaleX(0.8878);transform-origin:0 0;">Wasm</div>
<div class="a" style="left:1864.3px;top:95.2px;width:69.7px;height:20.6px;border:1px solid #7d8379;border-radius:6.5px"></div>
<div class="t" style="left:1870.90px;top:100.99px;font-size:11px;font-weight:bold;color:#e8ebe5;">Other</div>
<div class="a" style="left:1163.0px;top:119px;width:1px;height:80px;background:#3d4838"></div>
<div class="t" style="left:1124.28px;top:125.38px;font-size:9px;-webkit-text-stroke:0.25px #e0e3dd;color:#e0e3dd;">5,000 ms</div>
<div class="a" style="left:1319.8px;top:119px;width:1px;height:80px;background:#3d4838"></div>
<div class="t" style="left:1276.08px;top:125.38px;font-size:9px;-webkit-text-stroke:0.25px #e0e3dd;color:#e0e3dd;">10,000 ms</div>
<div class="a" style="left:1477.0px;top:119px;width:1px;height:80px;background:#3d4838"></div>
<div class="t" style="left:1433.28px;top:125.38px;font-size:9px;-webkit-text-stroke:0.25px #e0e3dd;color:#e0e3dd;">15,000 ms</div>
<div class="a" style="left:1635.0px;top:119px;width:1px;height:80px;background:#3d4838"></div>
<div class="t" style="left:1591.28px;top:125.38px;font-size:9px;-webkit-text-stroke:0.25px #e0e3dd;color:#e0e3dd;">20,000 ms</div>
<div class="a" style="left:1792.0px;top:119px;width:1px;height:80px;background:#3d4838"></div>
<div class="t" style="left:1748.28px;top:125.38px;font-size:9px;-webkit-text-stroke:0.25px #e0e3dd;color:#e0e3dd;">25,000 ms</div>
<div class="a" style="left:1006px;top:119px;width:2px;height:80px;background:#5d6b57"></div>
<div class="a" style="left:1006px;top:119.3px;width:4.6px;height:18.4px;border-radius:0 3px 3px 0;background:#3c4a38;border:1px solid #5d6b57;border-left:none"></div>
<div class="a" style="left:1007.2px;top:125px;width:1.2px;height:7px;background:#9fd38f"></div>
<div class="a" style="left:1008.1px;top:147px;width:3.7px;height:2.8px;background:#34c15a"></div>
<div class="a" style="left:1013px;top:147px;width:7.0px;height:2.8px;background:#4e8ee8"></div>
<div class="a" style="left:1020.2px;top:145.5px;width:20.6px;height:9.8px;background:#3d4a39"></div>
<div class="a" style="left:1022px;top:147.5px;width:6.2px;height:5.1px;background:#ffffff"></div>
<div class="a" style="left:1028.2px;top:147.5px;width:10.2px;height:5.1px;background:#34c15a"></div>
<div class="a" style="left:1038.4px;top:147.5px;width:1.1px;height:5.1px;background:#4e8ee8"></div>
<div class="a" style="left:1041.2px;top:150.2px;width:6.8px;height:2.4px;background:#4e8ee8"></div>
<div class="a" style="left:1040px;top:153.3px;width:7.3px;height:2.5px;background:#34c15a"></div>
<div class="a" style="left:1048.2px;top:153px;width:9.4px;height:2.8px;background:#4e8ee8"></div>
<div class="a" style="left:1080px;top:153px;width:5.0px;height:2.8px;background:#34c15a"></div>
<div class="a" style="left:1085.5px;top:153px;width:9.5px;height:2.8px;background:#4e8ee8"></div>
<div class="a" style="left:1150px;top:153px;width:4.5px;height:2.8px;background:#34c15a"></div>
<div class="a" style="left:1155px;top:153px;width:9.0px;height:2.8px;background:#4e8ee8"></div>
<div class="a" style="left:1281.5px;top:153px;width:6.8px;height:2.8px;background:#34c15a"></div>
<div class="a" style="left:1288.8px;top:153px;width:10.4px;height:2.8px;background:#4e8ee8"></div>
<div class="a" style="left:1605px;top:153px;width:5.7px;height:2.8px;background:#34c15a"></div>
<div class="a" style="left:1611.5px;top:153px;width:9.5px;height:2.8px;background:#4e8ee8"></div>
<div class="a" style="left:1644px;top:153px;width:6.0px;height:2.8px;background:#34c15a"></div>
<div class="a" style="left:1651px;top:153px;width:9.0px;height:2.8px;background:#4e8ee8"></div>
<div class="a" style="left:1714px;top:153px;width:4.7px;height:2.8px;background:#34c15a"></div>
<div class="a" style="left:1719.5px;top:153px;width:9.5px;height:2.8px;background:#4e8ee8"></div>
<div class="a" style="left:1846px;top:153px;width:6.5px;height:2.8px;background:#34c15a"></div>
<div class="a" style="left:1853.8px;top:153px;width:9.2px;height:2.8px;background:#4e8ee8"></div>
<div class="a" style="left:1006px;top:200px;width:391px;height:27px;background:#222720;border-bottom:1px solid #46543f"></div>
<div class="t" style="left:1011.50px;top:207.84px;font-size:12px;-webkit-text-stroke:0.25px #e3e6e0;color:#e3e6e0;transform:scaleX(0.9685);transform-origin:0 0;">Name</div>
<div class="a" style="left:1006px;top:227px;width:391px;height:21px;background:#222720"></div>
<div class="a" style="left:1012.5px;top:232px;width:11px;height:11px;border:1.3px solid #a9ada6;border-radius:1.5px"></div>
<div class="t" style="left:1029.00px;top:232.64px;font-size:12px;-webkit-text-stroke:0.25px #e3e6e0;color:#e3e6e0;transform:scaleX(0.9921);transform-origin:0 0;">cognito-idp.us-east-2.amazonaws.com</div>
<div class="a" style="left:1006px;top:248px;width:391px;height:21px;background:#1b1f19"></div>
<svg style="left:1012px;top:252.5px" width="12" height="12" viewBox="0 0 12 12"><rect x="0.8" y="0.8" width="10.4" height="10.4" rx="1.2" fill="none" stroke="#e0835a" stroke-width="1.6"/><path d="M4.7 4.3L3.4 6l1.3 1.7M7.3 4.3L8.6 6 7.3 7.7" fill="none" stroke="#e0835a" stroke-width="1.3"/></svg>
<div class="t" style="left:1029.00px;top:253.64px;font-size:12px;-webkit-text-stroke:0.25px #e3e6e0;color:#e3e6e0;transform:scaleX(0.9921);transform-origin:0 0;">cognito-idp.us-east-2.amazonaws.com</div>
<div class="a" style="left:1006px;top:269px;width:391px;height:21px;background:#222720"></div>
<svg style="left:1011px;top:274.3px" width="14" height="10.8" viewBox="0 0 14 12" preserveAspectRatio="none"><path d="M4.3 1C2.9 1 2.5 1.7 2.5 2.8v1.5c0 .9-.5 1.5-1.6 1.7 1.1.2 1.6.8 1.6 1.7v1.5c0 1.1.4 1.8 1.8 1.8M9.7 1c1.4 0 1.8.7 1.8 1.8v1.5c0 .9.5 1.5 1.6 1.7-1.1.2-1.6.8-1.6 1.7v1.5c0 1.1-.4 1.8-1.8 1.8" fill="none" stroke="#e0835a" stroke-width="1.6"/><circle cx="7" cy="4.2" r="1" fill="#e0835a"/><path d="M6.3 6.4h1.5v1.8l-.9 1.6h-.6z" fill="#e0835a"/></svg>
<div class="t" style="left:1029.00px;top:274.64px;font-size:12px;-webkit-text-stroke:0.25px #e3e6e0;color:#e3e6e0;transform:scaleX(1.0329);transform-origin:0 0;">market?page=4&amp;limit=10</div>
<div class="a" style="left:1006px;top:290px;width:391px;height:21px;background:#454c42"></div>
<svg style="left:1011px;top:295.3px" width="14" height="10.8" viewBox="0 0 14 12" preserveAspectRatio="none"><path d="M4.3 1C2.9 1 2.5 1.7 2.5 2.8v1.5c0 .9-.5 1.5-1.6 1.7 1.1.2 1.6.8 1.6 1.7v1.5c0 1.1.4 1.8 1.8 1.8M9.7 1c1.4 0 1.8.7 1.8 1.8v1.5c0 .9.5 1.5 1.6 1.7-1.1.2-1.6.8-1.6 1.7v1.5c0 1.1-.4 1.8-1.8 1.8" fill="none" stroke="#e0835a" stroke-width="1.6"/><circle cx="7" cy="4.2" r="1" fill="#e0835a"/><path d="M6.3 6.4h1.5v1.8l-.9 1.6h-.6z" fill="#e0835a"/></svg>
<div class="t" style="left:1029.00px;top:295.64px;font-size:12px;-webkit-text-stroke:0.25px #e3e6e0;color:#e3e6e0;transform:scaleX(1.0329);transform-origin:0 0;">market?page=4&amp;limit=10</div>
<div class="a" style="left:1006px;top:311px;width:391px;height:21px;background:#222720"></div>
<svg style="left:1011px;top:316.3px" width="14" height="10.8" viewBox="0 0 14 12" preserveAspectRatio="none"><path d="M4.3 1C2.9 1 2.5 1.7 2.5 2.8v1.5c0 .9-.5 1.5-1.6 1.7 1.1.2 1.6.8 1.6 1.7v1.5c0 1.1.4 1.8 1.8 1.8M9.7 1c1.4 0 1.8.7 1.8 1.8v1.5c0 .9.5 1.5 1.6 1.7-1.1.2-1.6.8-1.6 1.7v1.5c0 1.1-.4 1.8-1.8 1.8" fill="none" stroke="#e0835a" stroke-width="1.6"/><circle cx="7" cy="4.2" r="1" fill="#e0835a"/><path d="M6.3 6.4h1.5v1.8l-.9 1.6h-.6z" fill="#e0835a"/></svg>
<div class="t" style="left:1029.00px;top:316.64px;font-size:12px;-webkit-text-stroke:0.25px #e3e6e0;color:#e3e6e0;transform:scaleX(1.0317);transform-origin:0 0;">graphql</div>
<div class="a" style="left:1006px;top:332px;width:391px;height:21px;background:#1b1f19"></div>
<svg style="left:1011px;top:337.3px" width="14" height="10.8" viewBox="0 0 14 12" preserveAspectRatio="none"><path d="M4.3 1C2.9 1 2.5 1.7 2.5 2.8v1.5c0 .9-.5 1.5-1.6 1.7 1.1.2 1.6.8 1.6 1.7v1.5c0 1.1.4 1.8 1.8 1.8M9.7 1c1.4 0 1.8.7 1.8 1.8v1.5c0 .9.5 1.5 1.6 1.7-1.1.2-1.6.8-1.6 1.7v1.5c0 1.1-.4 1.8-1.8 1.8" fill="none" stroke="#e0835a" stroke-width="1.6"/><circle cx="7" cy="4.2" r="1" fill="#e0835a"/><path d="M6.3 6.4h1.5v1.8l-.9 1.6h-.6z" fill="#e0835a"/></svg>
<div class="t" style="left:1029.00px;top:337.64px;font-size:12px;-webkit-text-stroke:0.25px #e3e6e0;color:#e3e6e0;transform:scaleX(1.0317);transform-origin:0 0;">graphql</div>
<div class="a" style="left:1006px;top:353px;width:391px;height:21px;background:#222720"></div>
<svg style="left:1011px;top:358.3px" width="14" height="10.8" viewBox="0 0 14 12" preserveAspectRatio="none"><path d="M4.3 1C2.9 1 2.5 1.7 2.5 2.8v1.5c0 .9-.5 1.5-1.6 1.7 1.1.2 1.6.8 1.6 1.7v1.5c0 1.1.4 1.8 1.8 1.8M9.7 1c1.4 0 1.8.7 1.8 1.8v1.5c0 .9.5 1.5 1.6 1.7-1.1.2-1.6.8-1.6 1.7v1.5c0 1.1-.4 1.8-1.8 1.8" fill="none" stroke="#e0835a" stroke-width="1.6"/><circle cx="7" cy="4.2" r="1" fill="#e0835a"/><path d="M6.3 6.4h1.5v1.8l-.9 1.6h-.6z" fill="#e0835a"/></svg>
<div class="t" style="left:1029.00px;top:358.64px;font-size:12px;-webkit-text-stroke:0.25px #e3e6e0;color:#e3e6e0;transform:scaleX(1.0317);transform-origin:0 0;">graphql</div>
<div class="a" style="left:1006px;top:374px;width:391px;height:21px;background:#1b1f19"></div>
<svg style="left:1011px;top:379.3px" width="14" height="10.8" viewBox="0 0 14 12" preserveAspectRatio="none"><path d="M4.3 1C2.9 1 2.5 1.7 2.5 2.8v1.5c0 .9-.5 1.5-1.6 1.7 1.1.2 1.6.8 1.6 1.7v1.5c0 1.1.4 1.8 1.8 1.8M9.7 1c1.4 0 1.8.7 1.8 1.8v1.5c0 .9.5 1.5 1.6 1.7-1.1.2-1.6.8-1.6 1.7v1.5c0 1.1-.4 1.8-1.8 1.8" fill="none" stroke="#e0835a" stroke-width="1.6"/><circle cx="7" cy="4.2" r="1" fill="#e0835a"/><path d="M6.3 6.4h1.5v1.8l-.9 1.6h-.6z" fill="#e0835a"/></svg>
<div class="t" style="left:1029.00px;top:379.64px;font-size:12px;-webkit-text-stroke:0.25px #e3e6e0;color:#e3e6e0;transform:scaleX(1.0317);transform-origin:0 0;">graphql</div>
<div class="a" style="left:1006px;top:395px;width:391px;height:21px;background:#222720"></div>
<svg style="left:1011px;top:400.3px" width="14" height="10.8" viewBox="0 0 14 12" preserveAspectRatio="none"><path d="M4.3 1C2.9 1 2.5 1.7 2.5 2.8v1.5c0 .9-.5 1.5-1.6 1.7 1.1.2 1.6.8 1.6 1.7v1.5c0 1.1.4 1.8 1.8 1.8M9.7 1c1.4 0 1.8.7 1.8 1.8v1.5c0 .9.5 1.5 1.6 1.7-1.1.2-1.6.8-1.6 1.7v1.5c0 1.1-.4 1.8-1.8 1.8" fill="none" stroke="#e0835a" stroke-width="1.6"/><circle cx="7" cy="4.2" r="1" fill="#e0835a"/><path d="M6.3 6.4h1.5v1.8l-.9 1.6h-.6z" fill="#e0835a"/></svg>
<div class="t" style="left:1029.00px;top:400.64px;font-size:12px;-webkit-text-stroke:0.25px #e3e6e0;color:#e3e6e0;transform:scaleX(1.0317);transform-origin:0 0;">graphql</div>
<div class="a" style="left:1006px;top:416px;width:391px;height:21px;background:#1b1f19"></div>
<svg style="left:1011px;top:421.3px" width="14" height="10.8" viewBox="0 0 14 12" preserveAspectRatio="none"><path d="M4.3 1C2.9 1 2.5 1.7 2.5 2.8v1.5c0 .9-.5 1.5-1.6 1.7 1.1.2 1.6.8 1.6 1.7v1.5c0 1.1.4 1.8 1.8 1.8M9.7 1c1.4 0 1.8.7 1.8 1.8v1.5c0 .9.5 1.5 1.6 1.7-1.1.2-1.6.8-1.6 1.7v1.5c0 1.1-.4 1.8-1.8 1.8" fill="none" stroke="#e0835a" stroke-width="1.6"/><circle cx="7" cy="4.2" r="1" fill="#e0835a"/><path d="M6.3 6.4h1.5v1.8l-.9 1.6h-.6z" fill="#e0835a"/></svg>
<div class="t" style="left:1029.00px;top:421.64px;font-size:12px;-webkit-text-stroke:0.25px #e3e6e0;color:#e3e6e0;transform:scaleX(1.0317);transform-origin:0 0;">graphql</div>
<div class="a" style="left:1006px;top:437px;width:391px;height:21px;background:#222720"></div>
<svg style="left:1011px;top:442.3px" width="14" height="10.8" viewBox="0 0 14 12" preserveAspectRatio="none"><path d="M4.3 1C2.9 1 2.5 1.7 2.5 2.8v1.5c0 .9-.5 1.5-1.6 1.7 1.1.2 1.6.8 1.6 1.7v1.5c0 1.1.4 1.8 1.8 1.8M9.7 1c1.4 0 1.8.7 1.8 1.8v1.5c0 .9.5 1.5 1.6 1.7-1.1.2-1.6.8-1.6 1.7v1.5c0 1.1-.4 1.8-1.8 1.8" fill="none" stroke="#e0835a" stroke-width="1.6"/><circle cx="7" cy="4.2" r="1" fill="#e0835a"/><path d="M6.3 6.4h1.5v1.8l-.9 1.6h-.6z" fill="#e0835a"/></svg>
<div class="t" style="left:1029.00px;top:442.64px;font-size:12px;-webkit-text-stroke:0.25px #e3e6e0;color:#e3e6e0;transform:scaleX(1.0317);transform-origin:0 0;">graphql</div>
<div class="a" style="left:1006px;top:458px;width:391px;height:21px;background:#1b1f19"></div>
<svg style="left:1011px;top:463.3px" width="14" height="10.8" viewBox="0 0 14 12" preserveAspectRatio="none"><path d="M4.3 1C2.9 1 2.5 1.7 2.5 2.8v1.5c0 .9-.5 1.5-1.6 1.7 1.1.2 1.6.8 1.6 1.7v1.5c0 1.1.4 1.8 1.8 1.8M9.7 1c1.4 0 1.8.7 1.8 1.8v1.5c0 .9.5 1.5 1.6 1.7-1.1.2-1.6.8-1.6 1.7v1.5c0 1.1-.4 1.8-1.8 1.8" fill="none" stroke="#e0835a" stroke-width="1.6"/><circle cx="7" cy="4.2" r="1" fill="#e0835a"/><path d="M6.3 6.4h1.5v1.8l-.9 1.6h-.6z" fill="#e0835a"/></svg>
<div class="t" style="left:1029.00px;top:463.64px;font-size:12px;-webkit-text-stroke:0.25px #e3e6e0;color:#e3e6e0;transform:scaleX(1.0317);transform-origin:0 0;">graphql</div>
<div class="a" style="left:1397px;top:200px;width:1px;height:438px;background:#46543f"></div>
<div class="a" style="left:1398px;top:200px;width:496px;height:27px;background:#333d2f;border-bottom:1px solid #46543f"></div>
<div class="a" style="left:1398px;top:227px;width:496px;height:411px;background:#222720"></div>
<svg style="left:1412.5px;top:208px" width="11" height="10" viewBox="0 0 11 10"><path d="M0.8 0.3l9.4 9.4M10.2 0.3L0.8 9.7" stroke="#c7cfc2" stroke-width="1.4"/></svg>
<div class="t" style="left:1444.40px;top:209.14px;font-size:12px;-webkit-text-stroke:0.25px #d9ddd5;color:#d9ddd5;transform:scaleX(0.9701);transform-origin:0 0;">Headers</div>
<div class="t" style="left:1509.50px;top:209.14px;font-size:12px;-webkit-text-stroke:0.25px #d9ddd5;color:#d9ddd5;transform:scaleX(0.9639);transform-origin:0 0;">Payload</div>
<div class="t" style="left:1572.40px;top:209.14px;font-size:12px;-webkit-text-stroke:0.25px #a8d79d;color:#a8d79d;transform:scaleX(0.9747);transform-origin:0 0;">Preview</div>
<div class="t" style="left:1635.00px;top:209.14px;font-size:12px;-webkit-text-stroke:0.25px #d9ddd5;color:#d9ddd5;transform:scaleX(0.9438);transform-origin:0 0;">Response</div>
<div class="t" style="left:1707.00px;top:209.14px;font-size:12px;-webkit-text-stroke:0.25px #d9ddd5;color:#d9ddd5;transform:scaleX(1.0927);transform-origin:0 0;">Initiator</div>
<div class="t" style="left:1771.00px;top:209.14px;font-size:12px;-webkit-text-stroke:0.25px #d9ddd5;color:#d9ddd5;transform:scaleX(1.0405);transform-origin:0 0;">Timing</div>
<div class="a" style="left:1562px;top:223px;width:63px;height:3px;border-radius:2px 2px 0 0;background:#96d48c"></div>
<svg style="left:1410.2px;top:240.8px" width="8" height="5" viewBox="0 0 8 5"><path d="M0 0h8L4 4.6z" fill="#c4c8c0"/></svg>
<div class="t" style="left:1422.5px;top:238.77px;font-family:'Liberation Mono',monospace;font-size:11px"><span style="color:#e3e3e3;-webkit-text-stroke:0.2px #e3e3e3">{,…}</span></div>
<div class="t" style="left:1434.2px;top:254.17px;font-family:'Liberation Mono',monospace;font-size:11px"><span style="color:#7cacf8;-webkit-text-stroke:0.2px #7cacf8">count</span><span style="color:#e3e3e3;-webkit-text-stroke:0.2px #e3e3e3">: </span><span style="color:#9980ff;-webkit-text-stroke:0.2px #9980ff">68</span></div>
<svg style="left:1422.5px;top:272.3px" width="8" height="5" viewBox="0 0 8 5"><path d="M0 0h8L4 4.6z" fill="#c4c8c0"/></svg>
<div class="t" style="left:1433.8px;top:270.17px;font-family:'Liberation Mono',monospace;font-size:11px"><span style="color:#7cacf8;-webkit-text-stroke:0.2px #7cacf8">market</span><span style="color:#e3e3e3;-webkit-text-stroke:0.2px #e3e3e3">: [{name: "Test Market 50537", market_id: 74,…}, {name: "Test Market 22771", market_id: 73,…},…]</span></div>
<svg style="left:1435.5px;top:286px" width="5" height="8" viewBox="0 0 5 8"><path d="M0 0v8L4.6 4z" fill="#c4c8c0"/></svg>
<div class="t" style="left:1446px;top:286.17px;font-family:'Liberation Mono',monospace;font-size:11px"><span style="color:#7cacf8;-webkit-text-stroke:0.2px #7cacf8">0</span><span style="color:#e3e3e3;-webkit-text-stroke:0.2px #e3e3e3">: {name: "Test Market 50537", market_id: 74,…}</span></div>
<svg style="left:1435.5px;top:302px" width="5" height="8" viewBox="0 0 5 8"><path d="M0 0v8L4.6 4z" fill="#c4c8c0"/></svg>
<div class="t" style="left:1446px;top:302.17px;font-family:'Liberation Mono',monospace;font-size:11px"><span style="color:#7cacf8;-webkit-text-stroke:0.2px #7cacf8">1</span><span style="color:#e3e3e3;-webkit-text-stroke:0.2px #e3e3e3">: {name: "Test Market 22771", market_id: 73,…}</span></div>
<svg style="left:1435.5px;top:318px" width="5" height="8" viewBox="0 0 5 8"><path d="M0 0v8L4.6 4z" fill="#c4c8c0"/></svg>
<div class="t" style="left:1446px;top:318.17px;font-family:'Liberation Mono',monospace;font-size:11px"><span style="color:#7cacf8;-webkit-text-stroke:0.2px #7cacf8">2</span><span style="color:#e3e3e3;-webkit-text-stroke:0.2px #e3e3e3">: {name: "Test Market 26749", market_id: 72,…}</span></div>
<svg style="left:1435.5px;top:334px" width="5" height="8" viewBox="0 0 5 8"><path d="M0 0v8L4.6 4z" fill="#c4c8c0"/></svg>
<div class="t" style="left:1446px;top:334.17px;font-family:'Liberation Mono',monospace;font-size:11px"><span style="color:#7cacf8;-webkit-text-stroke:0.2px #7cacf8">3</span><span style="color:#e3e3e3;-webkit-text-stroke:0.2px #e3e3e3">: {name: "Test Market 72024", market_id: 71,…}</span></div>
<svg style="left:1435.5px;top:350px" width="5" height="8" viewBox="0 0 5 8"><path d="M0 0v8L4.6 4z" fill="#c4c8c0"/></svg>
<div class="t" style="left:1446px;top:350.17px;font-family:'Liberation Mono',monospace;font-size:11px"><span style="color:#7cacf8;-webkit-text-stroke:0.2px #7cacf8">4</span><span style="color:#e3e3e3;-webkit-text-stroke:0.2px #e3e3e3">: {name: "Test Market 19182", market_id: 70,…}</span></div>
<svg style="left:1435.5px;top:366px" width="5" height="8" viewBox="0 0 5 8"><path d="M0 0v8L4.6 4z" fill="#c4c8c0"/></svg>
<div class="t" style="left:1446px;top:366.17px;font-family:'Liberation Mono',monospace;font-size:11px"><span style="color:#7cacf8;-webkit-text-stroke:0.2px #7cacf8">5</span><span style="color:#e3e3e3;-webkit-text-stroke:0.2px #e3e3e3">: {name: "Test Market 40679", market_id: 69,…}</span></div>
<svg style="left:1435.5px;top:382px" width="5" height="8" viewBox="0 0 5 8"><path d="M0 0v8L4.6 4z" fill="#c4c8c0"/></svg>
<div class="t" style="left:1446px;top:382.17px;font-family:'Liberation Mono',monospace;font-size:11px"><span style="color:#7cacf8;-webkit-text-stroke:0.2px #7cacf8">6</span><span style="color:#e3e3e3;-webkit-text-stroke:0.2px #e3e3e3">: {name: "Test Market 81266", market_id: 68,…}</span></div>
<svg style="left:1435.5px;top:398px" width="5" height="8" viewBox="0 0 5 8"><path d="M0 0v8L4.6 4z" fill="#c4c8c0"/></svg>
<div class="t" style="left:1446px;top:398.17px;font-family:'Liberation Mono',monospace;font-size:11px"><span style="color:#7cacf8;-webkit-text-stroke:0.2px #7cacf8">7</span><span style="color:#e3e3e3;-webkit-text-stroke:0.2px #e3e3e3">: {name: "Test Market 47821", market_id: 67,…}</span></div>
<svg style="left:1435.5px;top:414px" width="5" height="8" viewBox="0 0 5 8"><path d="M0 0v8L4.6 4z" fill="#c4c8c0"/></svg>
<div class="t" style="left:1446px;top:414.17px;font-family:'Liberation Mono',monospace;font-size:11px"><span style="color:#7cacf8;-webkit-text-stroke:0.2px #7cacf8">8</span><span style="color:#e3e3e3;-webkit-text-stroke:0.2px #e3e3e3">: {name: "Test Market 62588", market_id: 66,…}</span></div>
<svg style="left:1435.5px;top:430px" width="5" height="8" viewBox="0 0 5 8"><path d="M0 0v8L4.6 4z" fill="#c4c8c0"/></svg>
<div class="t" style="left:1446px;top:430.17px;font-family:'Liberation Mono',monospace;font-size:11px"><span style="color:#7cacf8;-webkit-text-stroke:0.2px #7cacf8">9</span><span style="color:#e3e3e3;-webkit-text-stroke:0.2px #e3e3e3">: {name: "Test Market 16934", market_id: 65,…}</span></div>
<svg style="left:1435.5px;top:446px" width="5" height="8" viewBox="0 0 5 8"><path d="M0 0v8L4.6 4z" fill="#c4c8c0"/></svg>
<div class="t" style="left:1446px;top:446.17px;font-family:'Liberation Mono',monospace;font-size:11px"><span style="color:#7cacf8;-webkit-text-stroke:0.2px #7cacf8">10</span><span style="color:#e3e3e3;-webkit-text-stroke:0.2px #e3e3e3">: {name: "Test Market 25155", market_id: 64,…}</span></div>
<svg style="left:1435.5px;top:462px" width="5" height="8" viewBox="0 0 5 8"><path d="M0 0v8L4.6 4z" fill="#c4c8c0"/></svg>
<div class="t" style="left:1446px;top:462.17px;font-family:'Liberation Mono',monospace;font-size:11px"><span style="color:#7cacf8;-webkit-text-stroke:0.2px #7cacf8">11</span><span style="color:#e3e3e3;-webkit-text-stroke:0.2px #e3e3e3">: {name: "Test Market 25155", market_id: 63,…}</span></div>
<svg style="left:1435.5px;top:478px" width="5" height="8" viewBox="0 0 5 8"><path d="M0 0v8L4.6 4z" fill="#c4c8c0"/></svg>
<div class="t" style="left:1446px;top:478.17px;font-family:'Liberation Mono',monospace;font-size:11px"><span style="color:#7cacf8;-webkit-text-stroke:0.2px #7cacf8">12</span><span style="color:#e3e3e3;-webkit-text-stroke:0.2px #e3e3e3">: {name: "Test Market 70235", market_id: 62,…}</span></div>
<svg style="left:1435.5px;top:494px" width="5" height="8" viewBox="0 0 5 8"><path d="M0 0v8L4.6 4z" fill="#c4c8c0"/></svg>
<div class="t" style="left:1446px;top:494.17px;font-family:'Liberation Mono',monospace;font-size:11px"><span style="color:#7cacf8;-webkit-text-stroke:0.2px #7cacf8">13</span><span style="color:#e3e3e3;-webkit-text-stroke:0.2px #e3e3e3">: {name: "Test Market 83206", market_id: 61,…}</span></div>
<svg style="left:1435.5px;top:510px" width="5" height="8" viewBox="0 0 5 8"><path d="M0 0v8L4.6 4z" fill="#c4c8c0"/></svg>
<div class="t" style="left:1446px;top:510.17px;font-family:'Liberation Mono',monospace;font-size:11px"><span style="color:#7cacf8;-webkit-text-stroke:0.2px #7cacf8">14</span><span style="color:#e3e3e3;-webkit-text-stroke:0.2px #e3e3e3">: {name: "Test Market 27592", market_id: 60,…}</span></div>
<svg style="left:1435.5px;top:526px" width="5" height="8" viewBox="0 0 5 8"><path d="M0 0v8L4.6 4z" fill="#c4c8c0"/></svg>
<div class="t" style="left:1446px;top:526.17px;font-family:'Liberation Mono',monospace;font-size:11px"><span style="color:#7cacf8;-webkit-text-stroke:0.2px #7cacf8">15</span><span style="color:#e3e3e3;-webkit-text-stroke:0.2px #e3e3e3">: {name: "Test Market 27592", market_id: 59,…}</span></div>
<svg style="left:1435.5px;top:542px" width="5" height="8" viewBox="0 0 5 8"><path d="M0 0v8L4.6 4z" fill="#c4c8c0"/></svg>
<div class="t" style="left:1446px;top:542.17px;font-family:'Liberation Mono',monospace;font-size:11px"><span style="color:#7cacf8;-webkit-text-stroke:0.2px #7cacf8">16</span><span style="color:#e3e3e3;-webkit-text-stroke:0.2px #e3e3e3">: {name: "Test Market 30551", market_id: 58,…}</span></div>
<svg style="left:1435.5px;top:558px" width="5" height="8" viewBox="0 0 5 8"><path d="M0 0v8L4.6 4z" fill="#c4c8c0"/></svg>
<div class="t" style="left:1446px;top:558.17px;font-family:'Liberation Mono',monospace;font-size:11px"><span style="color:#7cacf8;-webkit-text-stroke:0.2px #7cacf8">17</span><span style="color:#e3e3e3;-webkit-text-stroke:0.2px #e3e3e3">: {name: "Test Market 68410", market_id: 57,…}</span></div>
<svg style="left:1435.5px;top:574px" width="5" height="8" viewBox="0 0 5 8"><path d="M0 0v8L4.6 4z" fill="#c4c8c0"/></svg>
<div class="t" style="left:1446px;top:574.17px;font-family:'Liberation Mono',monospace;font-size:11px"><span style="color:#7cacf8;-webkit-text-stroke:0.2px #7cacf8">18</span><span style="color:#e3e3e3;-webkit-text-stroke:0.2px #e3e3e3">: {name: "Test Market 22145", market_id: 56,…}</span></div>
<svg style="left:1435.5px;top:590px" width="5" height="8" viewBox="0 0 5 8"><path d="M0 0v8L4.6 4z" fill="#c4c8c0"/></svg>
<div class="t" style="left:1446px;top:590.17px;font-family:'Liberation Mono',monospace;font-size:11px"><span style="color:#7cacf8;-webkit-text-stroke:0.2px #7cacf8">19</span><span style="color:#e3e3e3;-webkit-text-stroke:0.2px #e3e3e3">: {name: "Test Market 87837", market_id: 55,…}</span></div>
<svg style="left:1435.5px;top:606px" width="5" height="8" viewBox="0 0 5 8"><path d="M0 0v8L4.6 4z" fill="#c4c8c0"/></svg>
<div class="t" style="left:1446px;top:606.17px;font-family:'Liberation Mono',monospace;font-size:11px"><span style="color:#7cacf8;-webkit-text-stroke:0.2px #7cacf8">20</span><span style="color:#e3e3e3;-webkit-text-stroke:0.2px #e3e3e3">: {name: "Test Market 35986", market_id: 54,…}</span></div>
<svg style="left:1435.5px;top:622px" width="5" height="8" viewBox="0 0 5 8"><path d="M0 0v8L4.6 4z" fill="#c4c8c0"/></svg>
<div class="t" style="left:1446px;top:622.17px;font-family:'Liberation Mono',monospace;font-size:11px"><span style="color:#7cacf8;-webkit-text-stroke:0.2px #7cacf8">21</span><span style="color:#e3e3e3;-webkit-text-stroke:0.2px #e3e3e3">: {name: "Test Market 81194", market_id: 53,…}</span></div>
</body></html>
